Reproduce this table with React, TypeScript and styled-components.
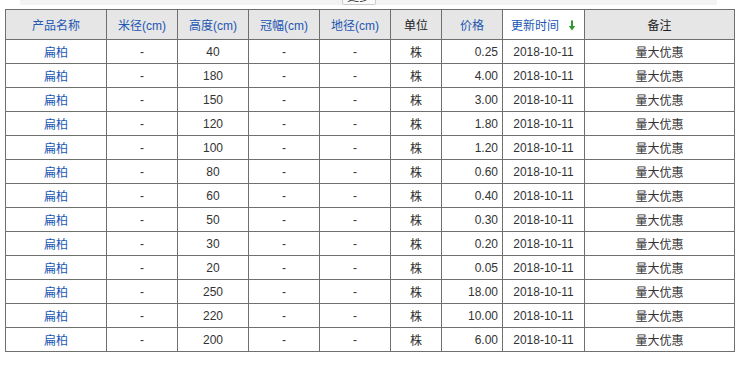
import React from 'react';
import styled, { createGlobalStyle } from 'styled-components';

const GlobalStyle = createGlobalStyle`
  body {
    margin: 0;
    background: #fff;
    font-family: "Liberation Sans", Arial, "Noto Sans CJK SC", sans-serif;
    font-size: 12px;
    color: #333;
  }
`;

const Page = styled.div`
  width: 747px;
  height: 368px;
  overflow: hidden;
  padding: 0 0 0 5px;
  box-sizing: border-box;
`;

const TopStrip = styled.div`
  height: 5px;
  margin: 0 30px 4px 15px;
  background: #f3f3f3;
  position: relative;
  overflow: hidden;
`;

const MoreButton = styled.div`
  position: absolute;
  left: 322px;
  top: -10px;
  height: 13px;
  padding: 0 4px;
  border: 1px solid #ccc;
  border-radius: 2px;
  background: #fafafa;
  font-size: 12px;
  line-height: 13px;
  color: #333;
`;

const Table = styled.table`
  border-collapse: collapse;
  table-layout: fixed;
  width: 729px;
  border: 1px solid #6f6f6f;
`;

const Th = styled.th<{ $link?: boolean; $active?: boolean }>`
  height: 29px;
  padding: 0;
  border: 1px solid #6f6f6f;
  background: ${(p) => (p.$active ? '#fff' : '#e6e6e6')};
  color: ${(p) => (p.$link ? '#2257b3' : '#222')};
  font-weight: normal;
  font-size: 12px;
  text-align: center;
  white-space: nowrap;
`;

const Td = styled.td<{ $align?: 'left' | 'center' | 'right'; $link?: boolean }>`
  height: 23px;
  padding: 0 ${(p) => (p.$align === 'right' ? '4px' : '0')} 0 0;
  border: 1px solid #6f6f6f;
  text-align: ${(p) => p.$align || 'center'};
  color: ${(p) => (p.$link ? '#2257b3' : '#333')};
  font-size: 12px;
  white-space: nowrap;
`;

const SortArrow = () => (
  <svg width="8" height="11" viewBox="0 0 8 11" style={{ marginLeft: 9, verticalAlign: -1 }}>
    <path d="M4 0.5V9" stroke="#2f9a2f" strokeWidth="2" />
    <path d="M0.8 6L4 10.5L7.2 6Z" fill="#2f9a2f" />
  </svg>
);

const widths = [101, 71, 71, 71, 71, 51, 61, 82, 150];

const rows: [string, string][] = [
  ['40', '0.25'],
  ['180', '4.00'],
  ['150', '3.00'],
  ['120', '1.80'],
  ['100', '1.20'],
  ['80', '0.60'],
  ['60', '0.40'],
  ['50', '0.30'],
  ['30', '0.20'],
  ['20', '0.05'],
  ['250', '18.00'],
  ['220', '10.00'],
  ['200', '6.00'],
];

export default function App() {
  return (
    <Page>
      <GlobalStyle />
      <TopStrip>
        <MoreButton>更多</MoreButton>
      </TopStrip>
      <Table>
        <colgroup>
          {widths.map((w, i) => (
            <col key={i} style={{ width: w }} />
          ))}
        </colgroup>
        <thead>
          <tr>
            <Th $link>产品名称</Th>
            <Th $link>米径(cm)</Th>
            <Th $link>高度(cm)</Th>
            <Th $link>冠幅(cm)</Th>
            <Th $link>地径(cm)</Th>
            <Th>单位</Th>
            <Th $link>价格</Th>
            <Th $link $active>
              更新时间
              <SortArrow />
            </Th>
            <Th>备注</Th>
          </tr>
        </thead>
        <tbody>
          {rows.map(([h, price], i) => (
            <tr key={i}>
              <Td $link>扁柏</Td>
              <Td>-</Td>
              <Td>{h}</Td>
              <Td>-</Td>
              <Td>-</Td>
              <Td>株</Td>
              <Td $align="right">{price}</Td>
              <Td>2018-10-11</Td>
              <Td>量大优惠</Td>
            </tr>
          ))}
        </tbody>
      </Table>
    </Page>
  );
}
